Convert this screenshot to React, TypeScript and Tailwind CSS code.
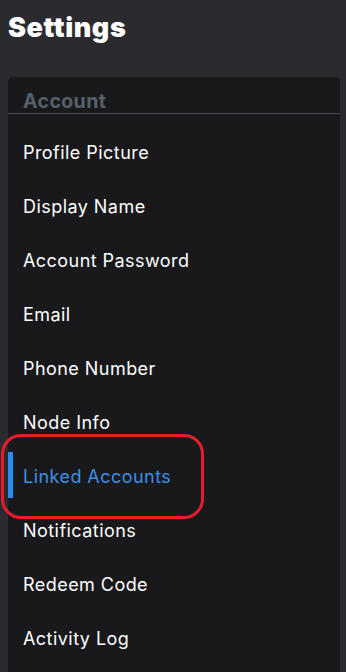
import React from "react";

const items = [
  "Profile Picture",
  "Display Name",
  "Account Password",
  "Email",
  "Phone Number",
  "Node Info",
  "Linked Accounts",
  "Notifications",
  "Redeem Code",
  "Activity Log",
];

export default function App() {
  return (
    <div
      className="w-[346px] h-[672px] overflow-hidden bg-[#2a2a2f] relative"
      style={{ fontFamily: "Inter, 'Noto Sans', sans-serif" }}
    >
      <h1 className="pl-[8px] pt-[12px] h-[77px] text-[27px] leading-[32px] font-black text-white tracking-[0.6px]">
        Settings
      </h1>
      <div className="mx-[8px] w-[332px] bg-[#19191c] rounded-[5px] min-h-[620px]">
        <div className="h-[37px] border-b border-[#45444f] px-[15px] pt-[12px] text-[19.5px] leading-[24px] font-bold text-[#56606a] tracking-[0.4px]">
          Account
        </div>
        <div className="pt-[12px]">
          {items.map((it) => {
            const active = it === "Linked Accounts";
            return (
              <div key={it} className="relative h-[54px] flex items-center pl-[15px]">
                {active && (
                  <div className="absolute left-0 top-[2px] w-[5px] h-[46px] bg-[#2a8cf0]" />
                )}
                <span
                  className={
                    "text-[18px] leading-[24px] tracking-[0.45px] " +
                    (active ? "text-[#3b8fe6]" : "text-white")
                  }
                >
                  {it}
                </span>
              </div>
            );
          })}
        </div>
      </div>
      <div className="absolute left-[1px] top-[434px] w-[203px] h-[85px] border-[3px] border-[#e31e2a] rounded-[20px]" />
    </div>
  );
}
